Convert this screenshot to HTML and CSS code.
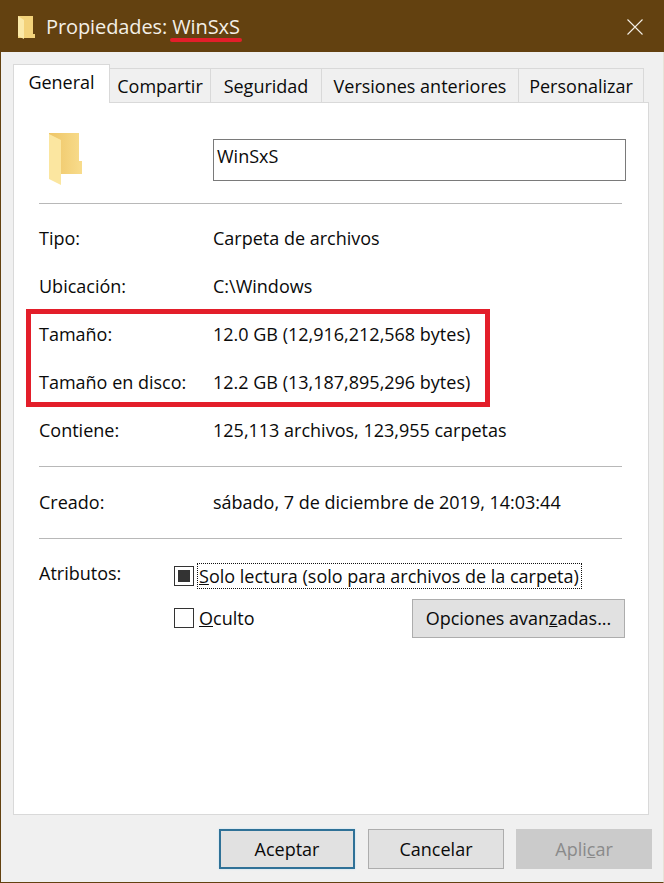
FILE: index.html
```html
<!DOCTYPE html>
<html lang="es">

<head>
  <meta charset="UTF-8">
  <title>Propiedades: WinSxS</title>
  <link rel="stylesheet" href="styles.css">
</head>

<body>
  <div class="window">
    <div class="titlebar">
      <svg class="title-icon" width="17" height="24" viewBox="0 0 17 24">
        <path d="M0 1h15v18h2v4H6L0 23z" fill="#f3d27a" />
        <path d="M0 1l6 4v19l-6-3z" fill="#fbe9a8" />
      </svg>
      <span class="title-text">Propiedades: <span class="title-name">WinSxS<i class="title-mark"></i></span></span>
      <svg class="close-icon" width="16" height="16" viewBox="0 0 16 16">
        <path d="M.5.5l15 15M15.5.5l-15 15" stroke="#f4efe6" stroke-width="1.1" fill="none" />
      </svg>
    </div>

    <div class="content">
      <div class="tabs">
        <div class="tab tab-active">General</div>
        <div class="tab tab-2">Compartir</div>
        <div class="tab tab-3">Seguridad</div>
        <div class="tab tab-4">Versiones anteriores</div>
        <div class="tab tab-5">Personalizar</div>
      </div>

      <div class="panel">
        <div class="head">
          <svg class="folder" width="36" height="52" viewBox="0 0 36 52">
            <defs>
              <linearGradient id="folder-back" x1="0" x2="1" y1="0" y2="0">
                <stop offset="0" stop-color="#eec566" />
                <stop offset="1" stop-color="#f8dc8c" />
              </linearGradient>
            </defs>
            <path d="M1 0h30v28h3v13H12L1 36z" fill="url(#folder-back)" />
            <path d="M1 1l12 6v45L1 46z" fill="#fbe6a0" />
          </svg>
          <div class="name-box">WinSxS</div>
        </div>
        <hr class="sep sep-a">

        <div class="row"><span class="label">Tipo:</span><span>Carpeta de archivos</span></div>
        <div class="row"><span class="label">Ubicación:</span><span>C:\Windows</span></div>
        <div class="row"><span class="label">Tamaño:</span><span>12.0 GB (12,916,212,568 bytes)</span></div>
        <div class="row"><span class="label">Tamaño en disco:</span><span>12.2 GB (13,187,895,296 bytes)</span></div>
        <div class="row"><span class="label">Contiene:</span><span>125,113 archivos, 123,955 carpetas</span></div>
        <hr class="sep sep-b">
        <div class="row"><span class="label">Creado:</span><span>sábado, 7 de diciembre de 2019, 14:03:44</span></div>
        <hr class="sep sep-c">

        <div class="attrs">
          <span class="attrs-label">Atributos:</span>
          <div class="attrs-body">
            <div class="check-row">
              <span class="check check-mixed"></span>
              <span class="focus"><u>S</u>olo lectura (solo para archivos de la carpeta)</span>
            </div>
            <div class="check-row check-row-b">
              <span class="check"></span>
              <span class="check-text"><u>O</u>culto</span>
              <button class="btn btn-adv">Opciones avan<u>z</u>adas...</button>
            </div>
          </div>
        </div>

        <div class="red-box"></div>
      </div>

      <div class="actions">
        <button class="btn btn-main btn-default">Aceptar</button>
        <button class="btn btn-main">Cancelar</button>
        <button class="btn btn-main btn-disabled">Apli<u>c</u>ar</button>
      </div>
    </div>
  </div>
</body>

</html>
```

FILE: styles.css
```css
body,
html {
  margin: 0;
  padding: 0;
  width: 100%;
  height: 100%;
  overflow: hidden;
  font-family: "Open Sans", "Noto Sans", sans-serif;
  font-size: 18px;
  color: #0a0a0a;
}

.window {
  width: 664px;
  height: 883px;
  box-sizing: border-box;
  display: flex;
  flex-direction: column;
  background-color: #f0f0f0;
  border: 1px solid #634110;
  border-top: 0;
  border-right-color: #e8e2d8;
}

.titlebar {
  height: 52px;
  flex: none;
  margin: 0 -1px;
  display: flex;
  align-items: center;
  background-color: #634110;
  color: #f4efe6;
  padding: 0 21px 0 18px;
}

.title-icon {
  margin-top: 1px;
}

.title-text {
  margin-left: 11px;
  font-size: 20px;
  letter-spacing: -0.1px;
  flex: 1;
}

.title-name {
  position: relative;
  display: inline-block;
}

.title-mark {
  position: absolute;
  left: -2px;
  right: -2px;
  bottom: -2px;
  height: 4px;
  border-radius: 2px;
  background-color: #e31e2a;
}

.close-icon {
  margin-top: 1px;
}

.content {
  flex: 1;
  display: flex;
  flex-direction: column;
  padding: 12px 14px 13px 12px;
  min-height: 0;
}

.tabs {
  display: flex;
  align-items: flex-end;
  height: 39px;
  margin-bottom: -1px;
  position: relative;
  z-index: 1;
}

.tab {
  box-sizing: border-box;
  height: 35px;
  display: flex;
  align-items: center;
  justify-content: center;
  background-color: #f0f0f0;
  border: 1px solid #d9d9d9;
  border-left: 0;
  padding-top: 1px;
}

.tab-active {
  width: 97px;
  height: 39px;
  background-color: #fff;
  border-left: 1px solid #d9d9d9;
  border-bottom: 0;
  padding: 0 0 5px;
}

.tab-2 { width: 101px; }
.tab-3 { width: 111px; }
.tab-4 { width: 197px; }
.tab-5 { width: 125px; }

.panel {
  position: relative;
  flex: 1;
  background-color: #fff;
  border: 1px solid #d9d9d9;
  padding: 0 26px 0 25px;
  min-height: 0;
}

.head {
  display: flex;
  height: 100px;
  box-sizing: border-box;
  padding: 30px 0 0 9px;
}

.folder {
  flex: none;
}

.name-box {
  box-sizing: border-box;
  flex: none;
  width: 413px;
  height: 42px;
  margin: 6px 0 0 129px;
  border: 1px solid #7a7a7a;
  padding: 4px 3px;
}

.sep {
  margin: 0;
  border: 0;
  border-top: 1px solid #a0a0a0;
  opacity: 0.75;
}

.row {
  display: flex;
  align-items: center;
  height: 48px;
}

.sep-a {
  margin-bottom: 10px;
}

.label {
  width: 174px;
  flex: none;
}

.sep-b {
  margin-top: 12px;
  margin-bottom: 11px;
}

.sep-c {
  margin-top: 12px;
}

.attrs {
  display: flex;
  padding-top: 22px;
}

.attrs-label {
  width: 135px;
  flex: none;
}

.attrs-body {
  flex: 1;
  margin-top: 3px;
}

.check-row {
  display: flex;
  align-items: center;
  height: 24px;
}

.check-row-b {
  height: 40px;
  margin-top: 10px;
}

.check {
  box-sizing: border-box;
  width: 20px;
  height: 20px;
  flex: none;
  border: 1px solid #333;
  background-color: #fff;
  margin-right: 4px;
  display: flex;
  align-items: center;
  justify-content: center;
}

.check-mixed::before {
  content: "";
  width: 12px;
  height: 12px;
  background-color: #333;
}

.focus {
  outline: 1px dotted #111;
  white-space: nowrap;
  box-sizing: border-box;
  width: 383px;
  height: 24px;
  line-height: 24px;
  padding-left: 1px;
}

.check-text {
  margin-left: 1px;
}

.btn {
  box-sizing: border-box;
  font-family: inherit;
  font-size: 18px;
  color: #0a0a0a;
  background-color: #e1e1e1;
  border: 1px solid #adadad;
  padding: 0;
  height: 39px;
}

.btn-adv {
  flex: none;
  width: 213px;
  margin-left: auto;
  margin-right: -3px;
}

.actions {
  display: flex;
  justify-content: flex-end;
  gap: 13px;
  margin-top: 14px;
  margin-right: -3px;
}

.btn-main {
  width: 136px;
  height: 40px;
}

.actions .btn-main + .btn-main + .btn-main {
  margin-left: -1px;
}

.btn-default {
  border: 2px solid #2f7197;
  box-shadow: 0 0 2px #bfe0f2;
}

.btn-disabled {
  background-color: #cbcbcb;
  border-color: #cbcbcb;
  color: #8a8a8a;
}

.red-box {
  position: absolute;
  left: 12px;
  top: 206px;
  width: 464px;
  height: 98px;
  box-sizing: border-box;
  border: 5px solid #e31e2a;
}
```
